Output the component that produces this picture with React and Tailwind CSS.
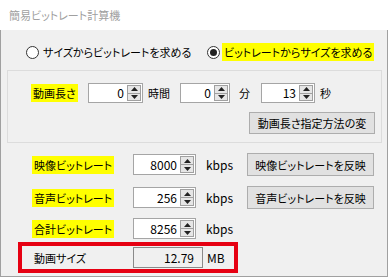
import React from 'react';

const font = "font-['Noto_Sans_CJK_JP','Noto_Sans',sans-serif] [font-feature-settings:'palt']";

const Spinner = () => (
  <div className="flex flex-col w-[14px] h-full border border-[#a0a0a0] bg-[#e6e6e6] ml-[3px]">
    <div className="flex-1 flex items-center justify-center border-b border-[#a0a0a0]">
      <svg width="7" height="4" viewBox="0 0 7 4"><path d="M0 4 L3.5 0 L7 4 Z" fill="#222" /></svg>
    </div>
    <div className="flex-1 flex items-center justify-center">
      <svg width="7" height="4" viewBox="0 0 7 4"><path d="M0 0 L3.5 4 L7 0 Z" fill="#222" /></svg>
    </div>
  </div>
);

const NumInput = ({ value, w, h = 'h-[20px]' }) => (
  <div className={`${w} ${h} flex items-stretch justify-end bg-white border border-[#a5a5a5] py-[1px] pr-[1px] text-[12px]`}>
    <span className="flex items-center leading-none">{value}</span>
    <Spinner />
  </div>
);

const Btn = ({ children, w, h }) => (
  <div className={`${w} ${h} flex items-center justify-center bg-[#e1e1e1] border border-[#adadad]`}>
    {children}
  </div>
);

const Mark = ({ children }) => (
  <span className="bg-[#ffff00] px-[2px] py-[1px]">{children}</span>
);

const Radio = ({ checked }) => (
  <div className="w-[13px] h-[13px] shrink-0 rounded-full border border-[#333] bg-white flex items-center justify-center">
    {checked && <div className="w-[7px] h-[7px] rounded-full bg-[#222]" />}
  </div>
);

const RateRow = ({ label, value, button }) => (
  <div className="flex items-center h-[21px] pl-[25px]">
    <div className="w-[101px]"><Mark>{label}</Mark></div>
    <NumInput value={value} w="w-[63px]" h="h-[21px]" />
    <div className="w-[51px] pl-[10px] text-[12px]">kbps</div>
    {button && <Btn w="w-[127px]" h="h-[23px]">{button}</Btn>}
  </div>
);

export default function App() {
  return (
    <div className={`w-[388px] h-[277px] flex flex-col text-[11px] leading-[14px] whitespace-nowrap text-black ${font}`}>
      <div className="h-[30px] bg-white flex items-center pl-[9px] text-[#a0a0a0]">簡易ビットレート計算機</div>
      <div className="flex-1 bg-[#f0f0f0] border-x border-b border-[#a0a0a0] px-[6px]">
        <div className="mt-[14px] h-[16px] flex items-center">
          <div className="w-[200px] pl-[19px] flex items-center">
            <Radio />
            <span className="ml-[4px]">サイズからビットレートを求める</span>
          </div>
          <div className="flex items-center">
            <Radio checked />
            <span className="ml-[2px]"><Mark>ビットレートからサイズを求める</Mark></span>
          </div>
        </div>

        <div className="mt-[10px] w-[375px] h-[73px] border border-[#dcdcdc] pt-[12px] pl-[23px]">
          <div className="flex items-center h-[20px]">
            <div className="w-[57px]"><Mark>動画長さ</Mark></div>
            <NumInput value="0" w="w-[55px]" />
            <div className="w-[37px] pl-[5px]">時間</div>
            <NumInput value="0" w="w-[50px]" />
            <div className="w-[31px] pl-[9px]">分</div>
            <NumInput value="13" w="w-[54px]" />
            <div className="pl-[5px]">秒</div>
          </div>
          <div className="mt-[9px] flex justify-end pr-[6px]">
            <Btn w="w-[126px]" h="h-[22px]">動画長さ指定方法の変</Btn>
          </div>
        </div>

        <div className="mt-[11px]">
          <RateRow label="映像ビットレート" value="8000" button="映像ビットレートを反映" />
        </div>
        <div className="mt-[12px]">
          <RateRow label="音声ビットレート" value="256" button="音声ビットレートを反映" />
        </div>
        <div className="mt-[10px]">
          <RateRow label="合計ビットレート" value="8256" />
        </div>

        <div className="mt-[3px] ml-[11px] w-[220px] h-[31px] border-[4px] border-[#e60012] flex items-center pl-[12px]">
          <div className="w-[99px]">動画サイズ</div>
          <div className="w-[70px] h-[21px] border border-[#8a8a8a] bg-[#f0f0f0] flex items-center justify-end pr-[8px] text-[12px]">12.79</div>
          <div className="pl-[4px] text-[12px]">MB</div>
        </div>
      </div>
    </div>
  );
}
